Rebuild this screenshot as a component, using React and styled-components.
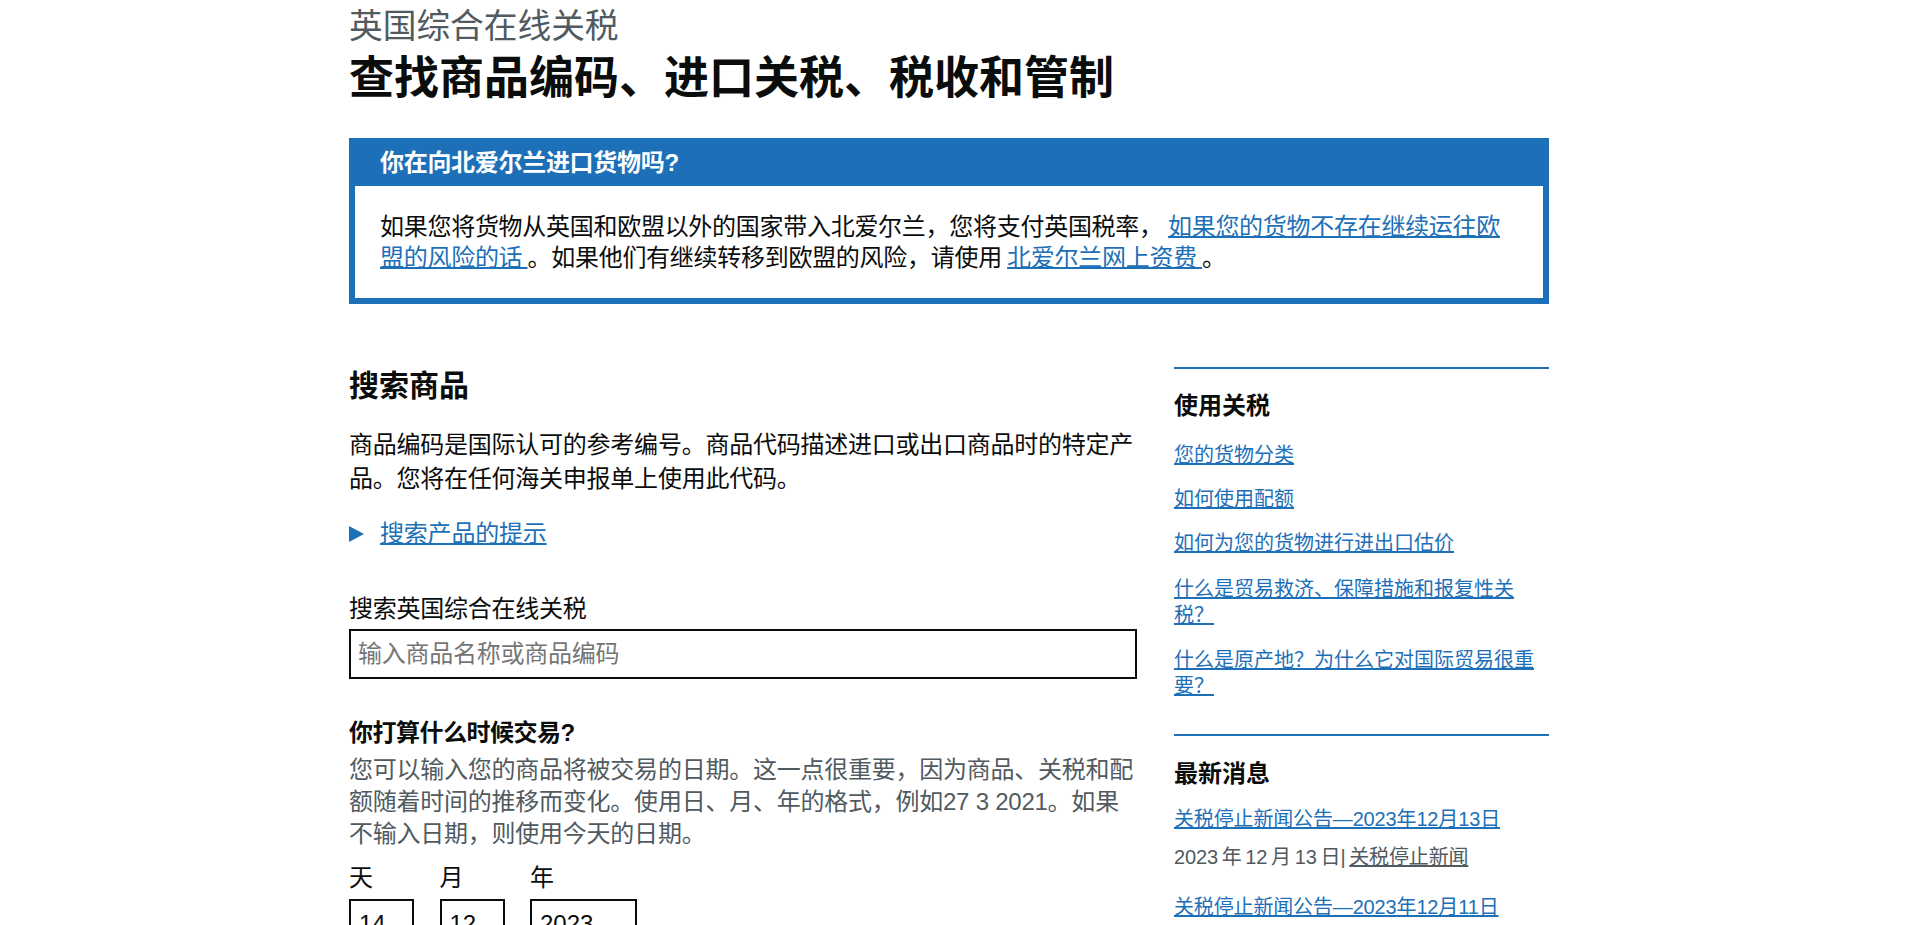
import React from "react"
import styled, { createGlobalStyle } from "styled-components"

const blue = "#1d70b8";
const ink = "#0b0c0c";
const grey = "#505a5f";

const GlobalStyle = createGlobalStyle`
  html, body {
    margin: 0;
    height: 925px;
    overflow: hidden;
    background: #fff;
  }
  body {
    color: ${ ink };
    font-family: "Liberation Sans", "Noto Sans CJK SC", sans-serif;
  }
  * {
    box-sizing: border-box;
  }
`

const Page = styled.div`
  width: 1200px;
  margin-left: 349px;
`
const Caption = styled.div`
  font-size: 33.7px;
  line-height: 40px;
  color: ${ grey };
  padding-top: 6px;
`
const Title = styled.h1`
  font-size: 45px;
  line-height: 60px;
  font-weight: 700;
  margin: 3px 0 0;
`
const Banner = styled.section`
  margin-top: 29px;
  border: 6px solid ${ blue };
  border-top: 0;
`
const BannerTitle = styled.h2`
  margin: 0 -6px;
  height: 48px;
  padding-left: 31px;
  background: ${ blue };
  color: #fff;
  font-size: 24px;
  line-height: 50px;
  font-weight: 700;
  letter-spacing: -0.3px;
`
const BannerBody = styled.p`
  margin: 0;
  padding: 25px 20px 25px 25px;
  font-size: 24px;
  line-height: 31px;
  letter-spacing: -0.28px;
  word-spacing: -1.2px;
`
const Link = styled.a`
  color: ${ blue };
  text-decoration: underline;
  text-decoration-thickness: 2px;
  text-underline-offset: 1px;
`
const Columns = styled.div`
  display: grid;
  grid-template-columns: 788px 375px;
  column-gap: 37px;
  margin-top: 63px;
`
const Main = styled.main`
  padding-top: 2px;
`
const SectionTitle = styled.h2`
  margin: 0;
  font-size: 30px;
  line-height: 34px;
  font-weight: 700;
`
const Lead = styled.p`
  margin: 25px 0 0;
  font-size: 24px;
  line-height: 34px;
  letter-spacing: -0.24px;
`
const Hint = styled.div`
  display: flex;
  align-items: center;
  gap: 16px;
  margin-top: 21px;
  font-size: 24px;
  line-height: 34px;
  letter-spacing: -0.2px;
`
const Arrow = styled.span`
  width: 0;
  height: 0;
  border-style: solid;
  border-width: 8.5px 0 8.5px 15px;
  border-color: transparent transparent transparent ${ blue };
`
const FieldLabel = styled.label`
  display: block;
  margin-top: 42px;
  font-size: 24px;
  line-height: 32px;
  letter-spacing: -0.24px;
`
const SearchInput = styled.input`
  display: block;
  width: 100%;
  height: 50px;
  margin-top: 4px;
  padding: 0 7px;
  border: 2px solid ${ ink };
  border-radius: 0;
  outline: none;
  font: inherit;
  font-size: 24px;
  letter-spacing: -0.24px;
  color: ${ ink };
  &::placeholder {
    color: #757575;
    opacity: 1;
  }
`
const DateTitle = styled.h3`
  margin: 38px 0 0;
  font-size: 24px;
  line-height: 32px;
  font-weight: 700;
  letter-spacing: -0.5px;
`
const DateHint = styled.p`
  margin: 5px 0 0;
  font-size: 24px;
  line-height: 32px;
  letter-spacing: -0.24px;
  color: ${ grey };
`
const DateRow = styled.div`
  display: flex;
  margin-top: 12px;
`
const DateField = styled.div`
  display: flex;
  flex-direction: column;
  margin-right: 25.5px;
  font-size: 24px;
  line-height: 32px;
`
const DateInput = styled.input`
  display: block;
  width: ${ p => p.$wide ? "107px" : "65px" };
  height: 50px;
  margin-top: 5px;
  padding: 0 8px;
  border: 2px solid ${ ink };
  border-radius: 0;
  outline: none;
  font: inherit;
  font-size: 24px;
  color: ${ ink };
`
const Side = styled.aside`
  display: flex;
  flex-direction: column;
`
const SideBlock = styled.section`
  border-top: 2px solid ${ blue };
  padding: 21px 0 35px;
`
const SideTitle = styled.h2`
  margin: 0;
  font-size: 24px;
  line-height: 32px;
  font-weight: 700;
`
const NewsTitle = styled(SideTitle)`
  padding-top: 1px;
`
const SideList = styled.ul`
  list-style: none;
  margin: 20px 0 0;
  padding: 0;
  display: flex;
  flex-direction: column;
  gap: 18px;
  font-size: 20px;
  line-height: 26px;
`
const GuideItem = styled.li`
  margin-top: ${ p => p.$wrapped ? "1.5px" : "0" };
`
const NewsList = styled(SideList)`
  margin-top: 16px;
  gap: 24px;
  letter-spacing: -0.15px;
`
const NewsItem = styled.li`
  display: flex;
  flex-direction: column;
  gap: 12px;
`
const Meta = styled.div`
  color: ${ grey };
  word-spacing: -1.6px;
`
const MetaLink = styled(Link)`
  color: ${ grey };
`

const guides = [
  { text: "您的货物分类" },
  { text: "如何使用配额" },
  { text: "如何为您的货物进行进出口估价" },
  { text: "什么是贸易救济、保障措施和报复性关税？", wrapped: true },
  { text: "什么是原产地？为什么它对国际贸易很重要？", wrapped: true }
];

const news = [
  { title: "关税停止新闻公告—2023年12月13日", date: "2023 年 12 月 13 日" },
  { title: "关税停止新闻公告—2023年12月11日", date: "2023 年 12 月 11 日" }
];

const App = () => (
  <Page>
    <GlobalStyle/>
    <Caption>英国综合在线关税</Caption>
    <Title>查找商品编码、进口关税、税收和管制</Title>

    <Banner>
      <BannerTitle>你在向北爱尔兰进口货物吗?</BannerTitle>
      <BannerBody>
        如果您将货物从英国和欧盟以外的国家带入北爱尔兰，您将支付英国税率， <Link href="#">如果您的货物不存在继续运往欧盟的风险的话 </Link>。如果他们有继续转移到欧盟的风险，请使用 <Link href="#">北爱尔兰网上资费 </Link>。
      </BannerBody>
    </Banner>

    <Columns>
      <Main>
        <SectionTitle>搜索商品</SectionTitle>
        <Lead>商品编码是国际认可的参考编号。商品代码描述进口或出口商品时的特定产品。您将在任何海关申报单上使用此代码。</Lead>
        <Hint>
          <Arrow/>
          <Link href="#">搜索产品的提示</Link>
        </Hint>
        <FieldLabel htmlFor="q">搜索英国综合在线关税</FieldLabel>
        <SearchInput id="q" placeholder="输入商品名称或商品编码"/>
        <DateTitle>你打算什么时候交易?</DateTitle>
        <DateHint>您可以输入您的商品将被交易的日期。这一点很重要，因为商品、关税和配额随着时间的推移而变化。使用日、月、年的格式，例如27 3 2021。如果不输入日期，则使用今天的日期。</DateHint>
        <DateRow>
          <DateField>天<DateInput defaultValue="14"/></DateField>
          <DateField>月<DateInput defaultValue="12"/></DateField>
          <DateField>年<DateInput $wide defaultValue="2023"/></DateField>
        </DateRow>
      </Main>

      <Side>
        <SideBlock>
          <SideTitle>使用关税</SideTitle>
          <SideList>
            { guides.map(g =>
                <GuideItem key={ g.text } $wrapped={ g.wrapped }>
                  <Link href="#">{ g.text }</Link>
                </GuideItem>
              )
            }
          </SideList>
        </SideBlock>
        <SideBlock>
          <NewsTitle>最新消息</NewsTitle>
          <NewsList>
            { news.map(n =>
                <NewsItem key={ n.title }>
                  <div><Link href="#">{ n.title }</Link></div>
                  <Meta>{ n.date }| <MetaLink href="#">关税停止新闻</MetaLink></Meta>
                </NewsItem>
              )
            }
          </NewsList>
        </SideBlock>
      </Side>
    </Columns>
  </Page>
)
export default App;
